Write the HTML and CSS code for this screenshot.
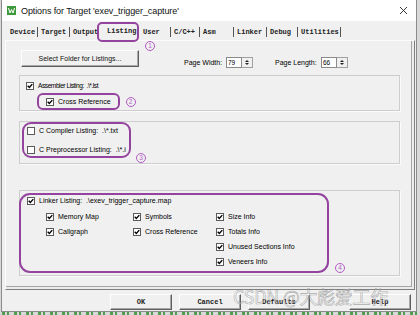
FILE: index.html
```html
<!DOCTYPE html>
<html>
<head>
<meta charset="utf-8">
<link rel="stylesheet" href="styles.css">
</head>
<body>
<div class="window">
  <div class="titlebar">
    <svg class="appicon" width="9" height="9" viewBox="0 0 9 9"><rect width="9" height="9" fill="#3c9a3c"/><polyline points="1.5,2 3,7 4.5,3.5 6,7 7.5,2" fill="none" stroke="#fff" stroke-width="1"/></svg>
    <span class="title">Options for Target 'exev_trigger_capture'</span>
    <svg class="close" width="9" height="9" viewBox="0 0 9 9"><path d="M1 1 L8 8 M8 1 L1 8" stroke="#222" stroke-width="0.9"/></svg>
  </div>
  <div class="tabs">
    <span class="tab">Device</span>
    <span class="tab">Target</span>
    <span class="tab nosep">Output</span>
    <span class="tab active">Listing</span>
    <span class="tab">User</span>
    <span class="tab">C/C++</span>
    <span class="tab">Asm</span>
    <span class="tab">Linker</span>
    <span class="tab">Debug</span>
    <span class="tab">Utilities</span>
  </div>
  <span class="num n1">1</span>
  <div class="panel">
    <div class="toprow">
      <div class="btn folder">Select Folder for Listings...</div>
      <div class="pg">
        <span class="pglabel w1">Page Width:</span>
        <span class="input">79</span>
        <span class="spin"><i class="up"></i><i class="down"></i></span>
        <span class="pglabel w2">Page Length:</span>
        <span class="input">66</span>
        <span class="spin"><i class="up"></i><i class="down"></i></span>
      </div>
    </div>

    <div class="group g1">
      <div class="cb"><span class="box"><svg width="6" height="6" viewBox="0 0 6 6"><path d="M0.7 2.8 L2.3 4.5 L5.3 1.1" fill="none" stroke="#000" stroke-width="1.4"/></svg></span><span class="squeeze">Assembler Listing:&nbsp; .\*.lst</span></div>
      <div class="mark-row">
        <div class="mark m2"><div class="cb"><span class="box"><svg width="6" height="6" viewBox="0 0 6 6"><path d="M0.7 2.8 L2.3 4.5 L5.3 1.1" fill="none" stroke="#000" stroke-width="1.4"/></svg></span><span>Cross Reference</span></div></div>
        <span class="num n2">2</span>
      </div>
    </div>

    <div class="group g2">
      <div class="mark-row end">
        <div class="mark m3">
          <div class="cb"><span class="box"></span><span>C Compiler Listing:&nbsp; .\*.txt</span></div>
          <div class="cb second"><span class="box"></span><span>C Preprocessor Listing:&nbsp; .\*.i</span></div>
        </div>
        <span class="num n3">3</span>
      </div>
    </div>

    <div class="group g3">
      <div class="mark-row end">
        <div class="mark m4">
          <div class="cb"><span class="box"><svg width="6" height="6" viewBox="0 0 6 6"><path d="M0.7 2.8 L2.3 4.5 L5.3 1.1" fill="none" stroke="#000" stroke-width="1.4"/></svg></span><span>Linker Listing:&nbsp; .\exev_trigger_capture.map</span></div>
          <div class="cols">
            <div class="col c1">
              <div class="cb"><span class="box"><svg width="6" height="6" viewBox="0 0 6 6"><path d="M0.7 2.8 L2.3 4.5 L5.3 1.1" fill="none" stroke="#000" stroke-width="1.4"/></svg></span><span>Memory Map</span></div>
              <div class="cb"><span class="box"><svg width="6" height="6" viewBox="0 0 6 6"><path d="M0.7 2.8 L2.3 4.5 L5.3 1.1" fill="none" stroke="#000" stroke-width="1.4"/></svg></span><span>Callgraph</span></div>
            </div>
            <div class="col c2">
              <div class="cb"><span class="box"><svg width="6" height="6" viewBox="0 0 6 6"><path d="M0.7 2.8 L2.3 4.5 L5.3 1.1" fill="none" stroke="#000" stroke-width="1.4"/></svg></span><span>Symbols</span></div>
              <div class="cb"><span class="box"><svg width="6" height="6" viewBox="0 0 6 6"><path d="M0.7 2.8 L2.3 4.5 L5.3 1.1" fill="none" stroke="#000" stroke-width="1.4"/></svg></span><span>Cross Reference</span></div>
            </div>
            <div class="col c3">
              <div class="cb"><span class="box"><svg width="6" height="6" viewBox="0 0 6 6"><path d="M0.7 2.8 L2.3 4.5 L5.3 1.1" fill="none" stroke="#000" stroke-width="1.4"/></svg></span><span>Size Info</span></div>
              <div class="cb"><span class="box"><svg width="6" height="6" viewBox="0 0 6 6"><path d="M0.7 2.8 L2.3 4.5 L5.3 1.1" fill="none" stroke="#000" stroke-width="1.4"/></svg></span><span>Totals Info</span></div>
              <div class="cb"><span class="box"><svg width="6" height="6" viewBox="0 0 6 6"><path d="M0.7 2.8 L2.3 4.5 L5.3 1.1" fill="none" stroke="#000" stroke-width="1.4"/></svg></span><span>Unused Sections Info</span></div>
              <div class="cb"><span class="box"><svg width="6" height="6" viewBox="0 0 6 6"><path d="M0.7 2.8 L2.3 4.5 L5.3 1.1" fill="none" stroke="#000" stroke-width="1.4"/></svg></span><span>Veneers Info</span></div>
            </div>
          </div>
        </div>
        <span class="num n4">4</span>
      </div>
    </div>
  </div>
  <div class="buttons">
    <div class="btn dlg">OK</div>
    <div class="btn dlg">Cancel</div>
    <div class="btn dlg">Defaults</div>
    <div class="btn dlg help">Help</div>
  </div>
  <div class="watermark">CSDN @大彪爱工作</div>
</div>
<div class="strip"></div>
</body>
</html>
```
FILE: styles.css
```css
* { box-sizing: border-box; }
html, body { margin: 0; padding: 0; }
body {
  width: 420px;
  height: 315px;
  overflow: hidden;
  background: #d8d8d8;
  font-family: "Liberation Sans", Arial, sans-serif;
  font-size: 7px;
  color: #000;
}
.window {
  position: relative;
  margin-left: 1px;
  width: 416px;
  height: 312px;
  background: #f0f0f0;
  border: 1px solid #8c8c8c;
  border-top: 0;
}
.titlebar {
  height: 21px;
  background: #fff;
  display: flex;
  align-items: center;
  padding-left: 5px;
  padding-right: 8px;
}
.appicon { flex: none; }
.title {
  margin-left: 5px;
  font-size: 9px;
  letter-spacing: -0.1px;
  color: #111;
}
.close { margin-left: auto; }

.tabs {
  position: relative;
  z-index: 2;
  height: 19px;
  margin-left: 5px;
  display: grid;
  grid-template-columns: 31px 32px 32px 38px 31px 29px 34px 33px 31px 43px;
  grid-template-rows: 19px;
  font-family: "Liberation Mono", "Courier New", monospace;
  font-weight: bold;
  font-size: 7px;
  color: #222;
}
.tab {
  height: 10px;
  margin-top: 6px;
  line-height: 10px;
  padding-left: 3px;
  border-right: 1px solid #555;
  white-space: nowrap;
}
.tab.nosep { border-right: 0; }
.tab.active {
  border: 2.5px solid #94449f;
  border-radius: 5px;
  margin-left: -5px;
  margin-top: 1px;
  width: 42px;
  height: 20px;
  line-height: 15px;
  padding-left: 8px;
}

.num {
  display: inline-flex;
  align-items: center;
  justify-content: center;
  width: 10px;
  height: 10px;
  border: 1px solid #b35cc4;
  border-radius: 50%;
  color: #b35cc4;
  font-size: 6.5px;
  line-height: 1;
  flex: none;
}
.n1 { position: absolute; left: 143px; top: 41px; z-index: 3; }

.panel {
  height: 250px;
  margin-left: 3px;
  width: 410px;
  border-top: 1px solid #fcfcfc;
  border-left: 1px solid #fcfcfc;
  border-right: 1px solid #7f7f7f;
  border-bottom: 1px solid #7f7f7f;
  box-shadow: inset -2px -2px 0 #ececec, inset -3px -3px 0 #a6a6a6;
  padding: 9px 0 0 13px;
  display: flex;
  flex-direction: column;
}
.toprow {
  display: flex;
  align-items: flex-start;
  height: 17px;
}
.btn {
  display: flex;
  align-items: center;
  justify-content: center;
  background: #f0f0f0;
  border: 1px solid;
  border-color: #fdfdfd #5e5e5e #5e5e5e #fdfdfd;
  box-shadow: inset -1px -1px 0 #a8a8a8;
}
.folder {
  margin-left: 2px;
  width: 118px;
  height: 17px;
  font-size: 7px;
  color: #111;
}
.pg {
  display: flex;
  align-items: center;
  margin-left: 45px;
  margin-top: 7px;
  height: 11px;
}
.pglabel { white-space: nowrap; }
.w1 { width: 42px; }
.w2 { width: 46px; margin-left: 22px; }
.input {
  width: 16px;
  height: 11px;
  background: #fff;
  border: 1px solid #8a8a8a;
  font-size: 6.5px;
  line-height: 9px;
  padding-left: 1px;
}
.spin {
  width: 11px;
  height: 11px;
  display: flex;
  flex-direction: column;
  align-items: center;
  justify-content: space-evenly;
  background: #f0f0f0;
  border: 1px solid #a0a0a0;
  border-left: 0;
}
.spin i {
  display: block;
  width: 0;
  height: 0;
  border-left: 2px solid transparent;
  border-right: 2px solid transparent;
}
.spin .up { border-bottom: 2px solid #222; }
.spin .down { border-top: 2px solid #222; }

.group {
  width: 381px;
  border: 1px solid #cdcdcd;
  box-shadow: 1px 1px 0 #fbfbfb;
}
.g1 { margin-top: 8px; height: 36px; padding: 5px 0 0 6px; }
.g2 { margin-top: 10px; height: 43px; padding: 0 0 0 2px; }
.g3 { margin-top: 26px; height: 86px; padding: 1px 0 0 0; }

.cb {
  display: flex;
  align-items: center;
  gap: 4px;
  height: 10px;
  line-height: 10px;
  white-space: nowrap;
}
.box {
  flex: none;
  width: 8px;
  height: 8px;
  background: #fff;
  border: 1px solid #5a5a5a;
  display: flex;
  align-items: center;
  justify-content: center;
}
.box svg { display: block; }
.squeeze { font-size: 6.6px; letter-spacing: -0.45px; }

.mark-row {
  display: flex;
  align-items: center;
  gap: 6px;
}
.mark-row.end { align-items: flex-end; }
.mark {
  border: 2px solid #94449f;
}
.m2 {
  margin-top: 2px;
  margin-left: 11px;
  height: 17px;
  border-radius: 6px;
  padding: 0 7px;
  display: flex;
  align-items: center;
}
.n2 { margin-top: 3px; }
.m3 {
  width: 109px;
  height: 36px;
  border-radius: 9px;
  padding: 2px 0 0 3px;
}
.m3 .second { margin-top: 9px; }
.n3 { margin-bottom: -5px; margin-left: -1px; }
.m4 {
  margin-left: -1px;
  margin-top: 1px;
  width: 310px;
  height: 80px;
  border-radius: 11px;
  padding: 1px 0 0 6px;
}
.n4 { margin-bottom: 0; }
.cols {
  display: flex;
  margin-top: 3.5px;
  margin-left: 19px;
}
.col {
  display: flex;
  flex-direction: column;
}
.col .cb { height: 15px; }
.c1 { width: 87px; }
.c2 { width: 83px; }

.buttons {
  display: flex;
  margin-top: 4px;
  padding-left: 108px;
  gap: 7px;
}
.dlg {
  width: 62px;
  height: 16px;
  font-family: "Liberation Mono", "Courier New", monospace;
  font-weight: bold;
  font-size: 7px;
  color: #222;
}
.help { margin-left: 32px; }

.watermark {
  position: absolute;
  left: 231px;
  top: 283px;
  font-family: "Noto Sans CJK SC", "Noto Sans", sans-serif;
  font-size: 18px;
  color: rgba(255, 255, 255, 0.35);
  -webkit-text-stroke: 0.6px rgba(110, 110, 110, 0.55);
  white-space: nowrap;
  letter-spacing: -0.3px;
}
.strip {
  height: 3px;
  margin-left: 2px;
  background: repeating-linear-gradient(90deg, #2f8f2f 0 3px, transparent 3px 5px, #2f8f2f 5px 7px, transparent 7px 12px);
  opacity: 0.8;
}
```
